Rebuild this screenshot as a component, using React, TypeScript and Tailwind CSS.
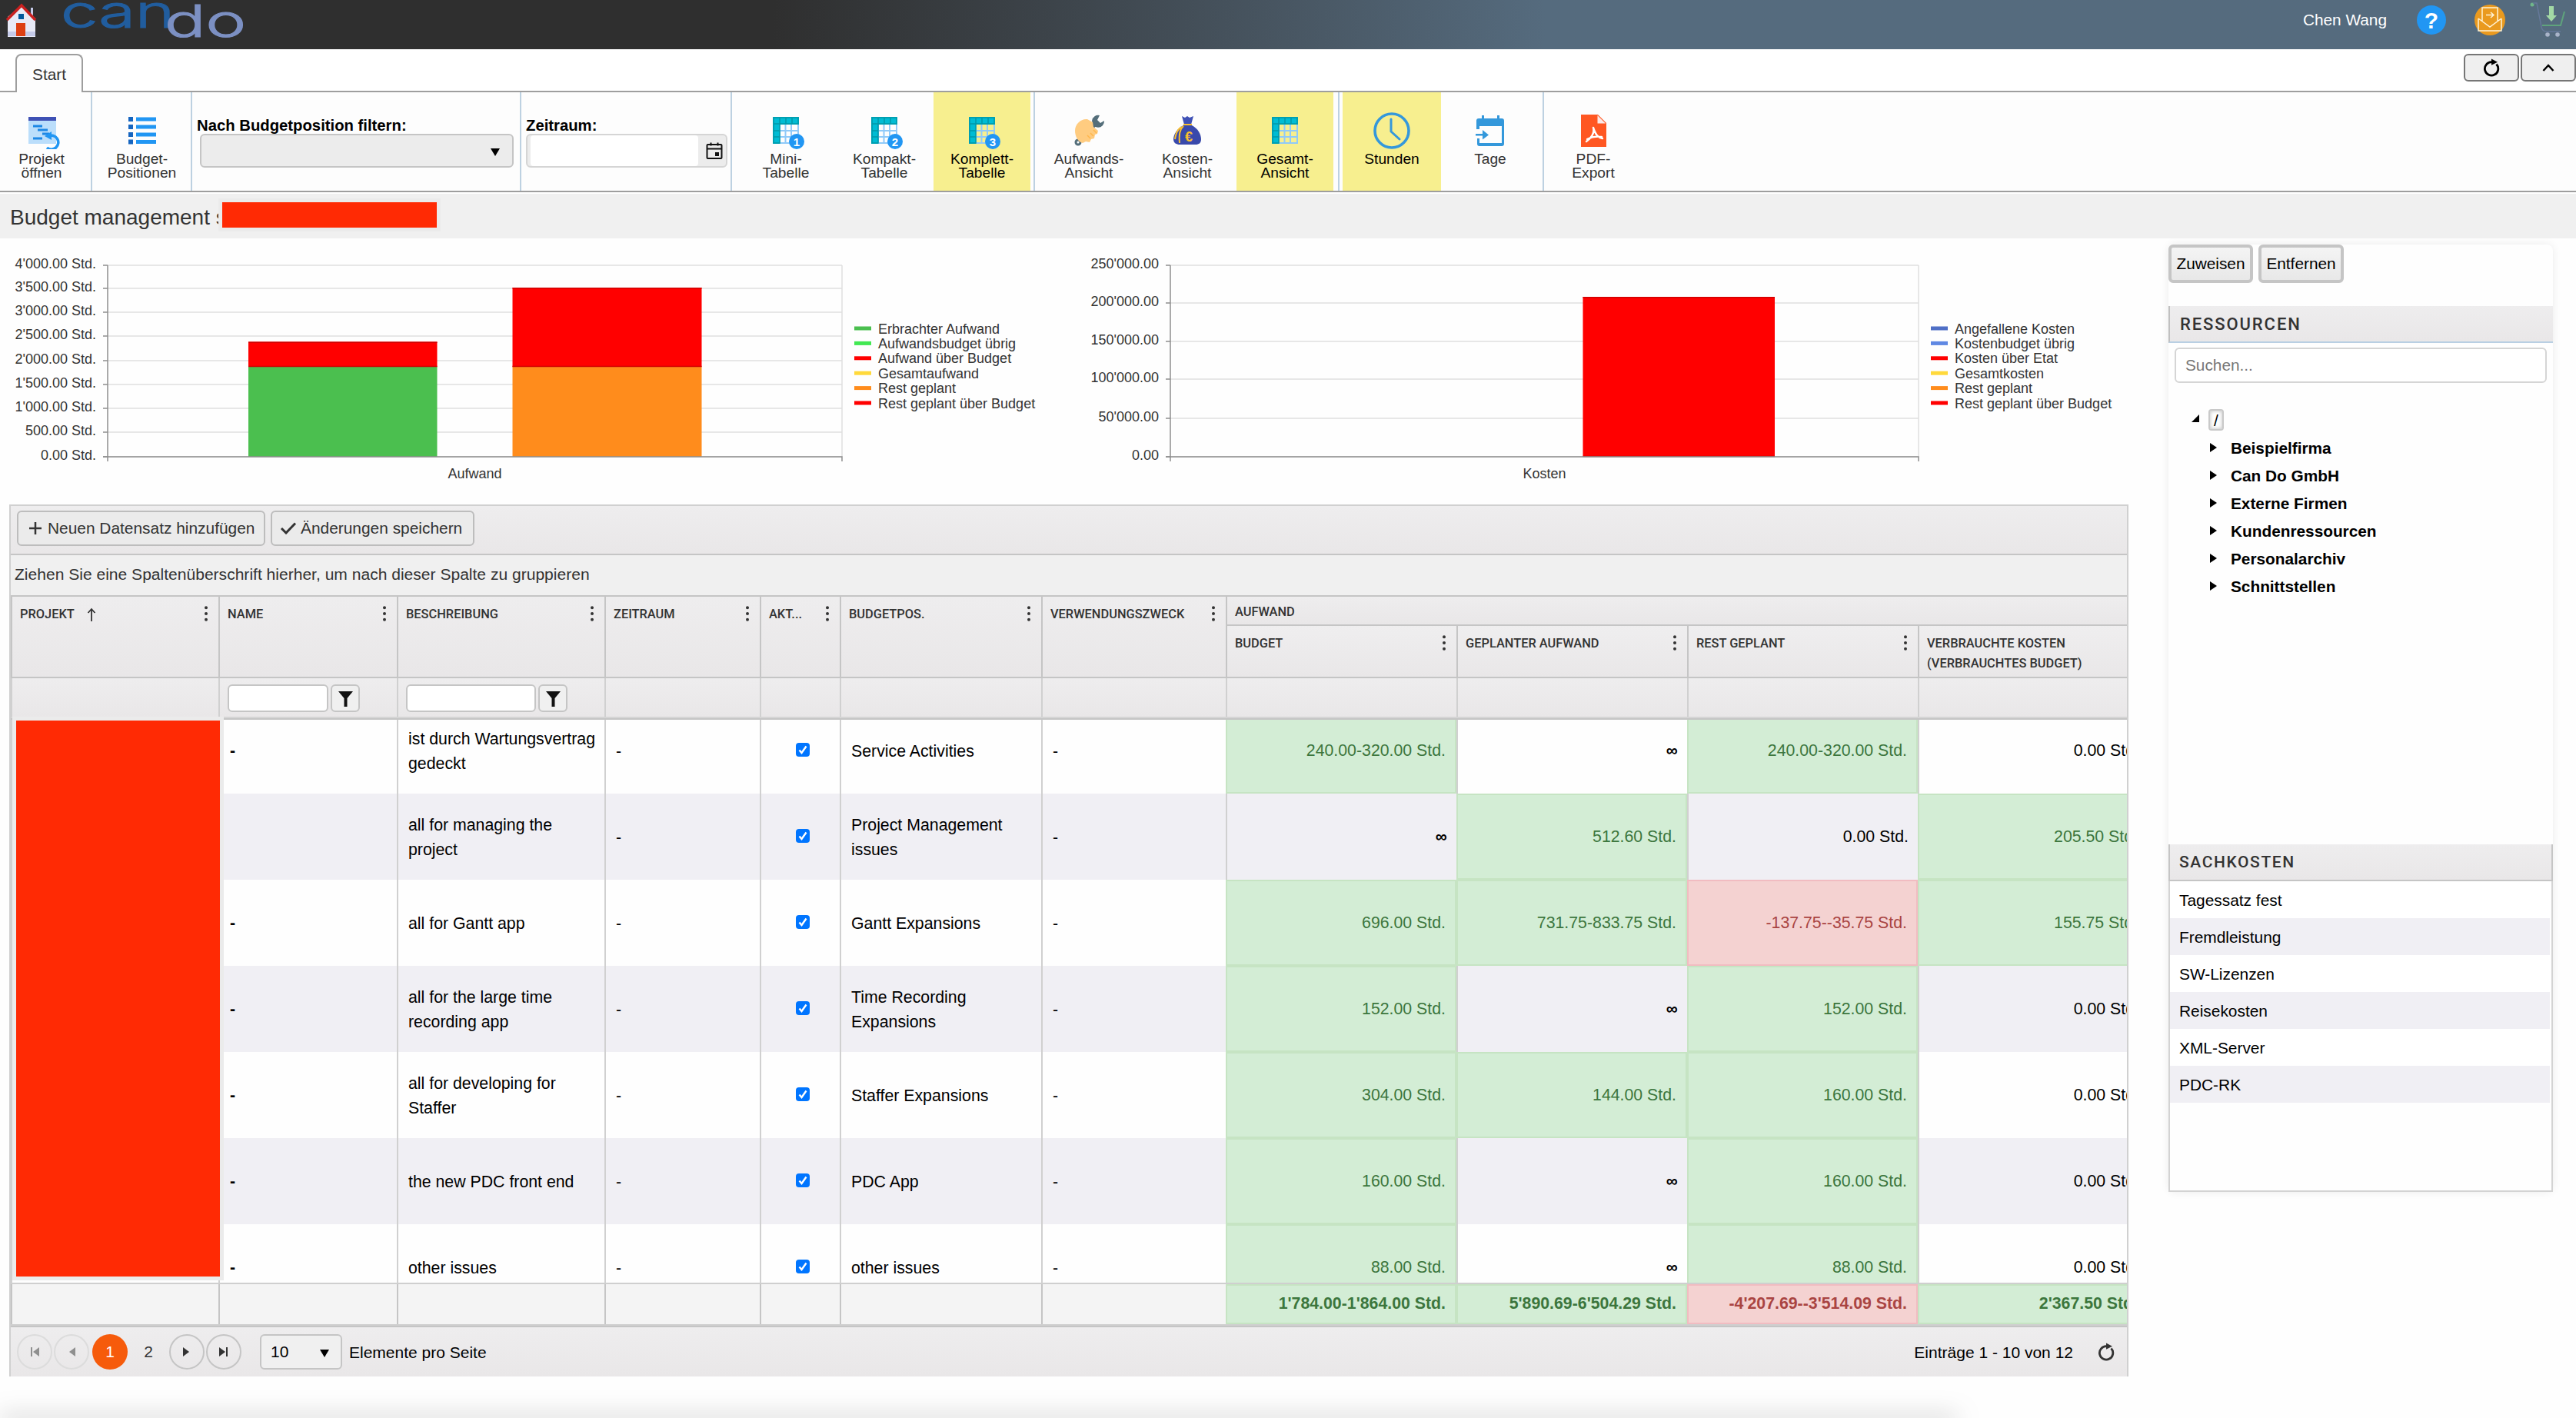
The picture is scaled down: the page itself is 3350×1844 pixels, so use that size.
import { ReactNode } from 'react'
import clsx from 'clsx'

type Tone = 'plain' | 'good' | 'bad'

interface Amount {
  text: string
  tone: Tone
}

interface BudgetRow {
  name: string
  description: string
  position: string
  amounts: Amount[]
}

const good = (text: string): Amount => ({ text, tone: 'good' })
const bad = (text: string): Amount => ({ text, tone: 'bad' })
const plain = (text: string): Amount => ({ text, tone: 'plain' })

const rows: BudgetRow[] = [
  {
    name: '-',
    description: 'ist durch Wartungsvertrag gedeckt',
    position: 'Service Activities',
    amounts: [good('240.00-320.00 Std.'), plain('∞'), good('240.00-320.00 Std.'), plain('0.00 Std.')],
  },
  {
    name: '',
    description: 'all for managing the project',
    position: 'Project Management issues',
    amounts: [plain('∞'), good('512.60 Std.'), plain('0.00 Std.'), good('205.50 Std.')],
  },
  {
    name: '-',
    description: 'all for Gantt app',
    position: 'Gantt Expansions',
    amounts: [good('696.00 Std.'), good('731.75-833.75 Std.'), bad('-137.75--35.75 Std.'), good('155.75 Std.')],
  },
  {
    name: '-',
    description: 'all for the large time recording app',
    position: 'Time Recording Expansions',
    amounts: [good('152.00 Std.'), plain('∞'), good('152.00 Std.'), plain('0.00 Std.')],
  },
  {
    name: '-',
    description: 'all for developing for Staffer',
    position: 'Staffer Expansions',
    amounts: [good('304.00 Std.'), good('144.00 Std.'), good('160.00 Std.'), plain('0.00 Std.')],
  },
  {
    name: '-',
    description: 'the new PDC front end',
    position: 'PDC App',
    amounts: [good('160.00 Std.'), plain('∞'), good('160.00 Std.'), plain('0.00 Std.')],
  },
  {
    name: '-',
    description: 'other issues',
    position: 'other issues',
    amounts: [good('88.00 Std.'), plain('∞'), good('88.00 Std.'), plain('0.00 Std.')],
  },
]

const totals: Amount[] = [
  good("1'784.00-1'864.00 Std."),
  good("5'890.69-6'504.29 Std."),
  bad("-4'207.69--3'514.09 Std."),
  good("2'367.50 Std."),
]

const gridCols =
  'grid grid-cols-[270px_232px_270px_202px_104px_262px_240px_300px_300px_300px_300px]'
const bar = 'bg-linear-to-b from-[#eeedee] to-[#e9e7e8]'

/* ---------- icons ---------- */

function HouseIcon() {
  return (
    <svg className="w-10 h-11" viewBox="0 0 40 44">
      <path d="M32 6h3v14h-3z" fill="#c5cae9" />
      <path d="M2 18 20 3l18 17v24H2z" fill="#e8eaf6" />
      <path d="M2 37h36v6H2z" fill="#c5cae9" />
      <path d="M13 26h12v17H13z" fill="#dd3f12" />
      <path d="M16 14h7v7h-7z" fill="#01579b" />
      <path d="M1 22 20 3l18 19" fill="none" stroke="#c9201f" strokeWidth="3.5" />
    </svg>
  )
}

function Logo() {
  return (
    <svg className="w-[236px] h-[50px]" viewBox="0 0 236 50">
      <g fontFamily="Inter, sans-serif" fontWeight="300" fontSize="58" strokeWidth="1.2">
        <text x="-3" y="34" textLength="148" lengthAdjust="spacingAndGlyphs" fill="#215d9e" stroke="#215d9e">
          can
        </text>
        <text x="132" y="46" textLength="106" lengthAdjust="spacingAndGlyphs" fill="#7c90c3" stroke="#7c90c3">
          do
        </text>
      </g>
    </svg>
  )
}

function ProjectIcon() {
  return (
    <svg className="size-12" viewBox="0 0 48 48">
      <path d="M7 6h36v35H7z" fill="#bbdefb" />
      <path d="M7 6h36v5H7z" fill="#3f51b5" />
      <path d="M13 18h12M19 23h13M25 28h9M13 34h12" stroke="#1e88e5" strokeWidth="3" />
      <path d="M31 46a9 9 0 1 0 2-15" fill="none" stroke="#2196f3" strokeWidth="3.5" />
      <path d="m28 31 9-6v11z" fill="#2196f3" />
    </svg>
  )
}

function ListIcon() {
  return (
    <svg className="size-12" viewBox="0 0 48 48">
      {[9, 19, 29, 38.5].map((y) => (
        <g key={y}>
          <rect x="6" y={y - 3} width="6" height="6" fill="#1565c0" />
          <rect x="16" y={y - 2.5} width="26" height="5" fill="#2196f3" />
        </g>
      ))}
    </svg>
  )
}

function TableIcon(props: { badge?: string }) {
  return (
    <svg className="size-12" viewBox="0 0 48 48">
      <path d="M16 15v26M23.5 15v26M31 15v26M40 15v26M16 24h25M16 32h25M16 40h25" stroke="#90caf9" strokeWidth="2" />
      <path d="M7 6h34v10H16v25H7z" fill="#00bcd4" />
      <path d="M8 7h32v8H16v25H8zM16 7v8M24 7v8M32 7v8M8 15h8M8 24h8M8 32h8" fill="none" stroke="#0097a7" strokeWidth="1.5" />
      {props.badge && (
        <>
          <circle cx="38" cy="38" r="10" fill="#2196f3" />
          <text x="38" y="43.5" textAnchor="middle" fontSize="15" fontWeight="700" fill="#fff">
            {props.badge}
          </text>
        </>
      )}
    </svg>
  )
}

function WrenchIcon() {
  return (
    <svg className="size-12" viewBox="0 0 48 48">
      <circle cx="10" cy="39" r="3" fill="none" stroke="#546e7a" strokeWidth="3" />
      <path d="M12 36 34 13" stroke="#546e7a" strokeWidth="6" />
      <path d="M38 4a8 8 0 1 0 6 7l-5 3-4-4z" fill="#546e7a" />
      <path d="M6 24C6 15 14 8 22 9l7 4 1 6 6 5-1 4-3 1-1 5-4 1-2 4-5-1-4 2C10 39 6 31 6 24z" fill="#ffcc80" />
      <path d="m22 30 4 4M26 27l4 4M30 23l4 4" stroke="#ffb74d" strokeWidth="1.5" />
    </svg>
  )
}

function MoneyIcon() {
  return (
    <svg className="size-12" viewBox="0 0 48 48">
      <path d="m17 5 4 2 3-2 3 2 5-2-3 11H20z" fill="#3f51b5" />
      <path d="M19 17h11c8 4 12 12 12 18 0 5-3 7-7 7H14c-4 0-8-2-8-7 0-6 5-14 13-18z" fill="#3949ab" />
      <path d="M19 16h11M19 18c-5 4-6 12-5 22M16 19c-6 5-7 10-8 16" fill="none" stroke="#fbc02d" strokeWidth="2" />
      <text x="26" y="38" textAnchor="middle" fontSize="18" fontWeight="700" fill="#fbc02d">
        €
      </text>
    </svg>
  )
}

function ClockIcon() {
  return (
    <svg className="size-12" viewBox="0 0 48 48">
      <circle cx="24" cy="24" r="22" fill="none" stroke="#3498db" strokeWidth="3.6" />
      <path d="M23 9v16l11 10" fill="none" stroke="#3498db" strokeWidth="3" strokeLinecap="round" strokeLinejoin="round" />
    </svg>
  )
}

function DayIcon() {
  return (
    <svg className="size-12" viewBox="0 0 48 48">
      <path d="M13 4h3v6h-3zM33 4h3v6h-3z" fill="#3498db" />
      <path d="M6 18v-7q0-3 3-3h30q3 0 3 3v30q0 3-3 3H10q-3 0-3-3v-7h3v6h29V18H10v4H6z" fill="#3498db" />
      <path d="M5 28h9v-5l8 6.500-8 6v-5H5z" fill="#3498db" />
    </svg>
  )
}

function PdfIcon() {
  return (
    <svg className="size-12" viewBox="0 0 48 48">
      <path d="M8 3h22l11 11v31H8z" fill="#ff5722" />
      <path d="M29.500 4v10.500H40z" fill="#fbe9e7" />
      <path d="M24 20c3 9 6 13 12 14M24 20c2 7-3 14-9 18M16 35c6-3 12-4 19-3" fill="none" stroke="#fff" strokeWidth="2.400" strokeLinecap="round" />
    </svg>
  )
}

function CalendarIcon() {
  return (
    <svg className="w-[22px] h-6" viewBox="0 0 22 24" fill="none" stroke="#111" strokeWidth="2">
      <rect x="1.500" y="4" width="19" height="18" rx="1" />
      <path d="M1 9.500h20M6.500 1.500v4M15.500 1.500v4" />
      <rect x="12" y="14" width="5" height="5" fill="#111" stroke="none" />
    </svg>
  )
}

function RefreshIcon() {
  return (
    <svg className="w-[23px] h-6" viewBox="0 0 23 24" fill="none">
      <path d="M17.500 7.500a8.700 8.700 0 1 1-6-2.800" stroke="currentColor" strokeWidth="2.800" />
      <path d="m11 .500 8 4.200-8 4z" fill="currentColor" />
    </svg>
  )
}

function MailIcon() {
  return (
    <svg className="size-[42px]" viewBox="0 0 42 42" fill="none" stroke="#fff3d6" strokeWidth="1.500">
      <circle cx="21" cy="21" r="20" fill="#ea9a1f" stroke="none" />
      <path d="M6 19v16h30V19M6 19l15 11 15-11M11 22V5h20v17" />
      <path d="M16 14.500h9M22 11l4 3.500-4 3.500" />
    </svg>
  )
}

function CartIcon() {
  return (
    <svg className="w-[46px] h-12" viewBox="0 0 46 48" fill="none">
      <circle cx="3" cy="6" r="2.500" fill="#6fb58a" />
      <path d="M4 4h5l6 31q1 6 7 6h18" stroke="#66799a" strokeWidth="1.500" />
      <path d="M45 15l-5 18H16" stroke="#5fa37c" strokeWidth="2" />
      <path d="M25 8h6v12h4l-7 8-7-8h4z" fill="#a3d9a5" />
      <circle cx="23" cy="45" r="2.800" fill="#a9b4c9" />
      <circle cx="36" cy="45" r="2.800" fill="#a9b4c9" />
    </svg>
  )
}

function DotsIcon() {
  return (
    <svg className="w-1 h-5" viewBox="0 0 4 20" fill="#333">
      <circle cx="2" cy="2.200" r="2" />
      <circle cx="2" cy="10" r="2" />
      <circle cx="2" cy="17.800" r="2" />
    </svg>
  )
}

function FilterIcon() {
  return (
    <svg className="w-[19px] h-5" viewBox="0 0 19 20">
      <path d="M0 0h19l-7.500 9v11h-4V9z" fill="#111" />
    </svg>
  )
}

/* ---------- header + ribbon ---------- */

function TopBar() {
  return (
    <header className="h-16 flex justify-between bg-linear-to-r from-[#2f2f2f] from-30% to-[#556b7e] to-60%">
      <div className="flex pl-2 gap-[34px]">
        <div className="pt-1">
          <HouseIcon />
        </div>
        <div className="pt-0.5">
          <Logo />
        </div>
      </div>
      <div className="flex items-start text-white text-[20.8px] pr-[14px]">
        <span className="pt-[6px] leading-10 mr-[39px]">Chen Wang</span>
        <span className="mt-[7px] size-[38px] rounded-full bg-[#2196f3] flex items-center justify-center text-[30px] font-bold mr-[36px]">
          ?
        </span>
        <span className="mt-[5px] mr-[31px]">
          <MailIcon />
        </span>
        <CartIcon />
      </div>
    </header>
  )
}

function RibbonItem(props: { icon: ReactNode; lines: string[]; active?: boolean; width?: string }) {
  return (
    <button
      className={clsx(
        'flex flex-col items-center pt-[26px] text-[19.2px] leading-[18px]',
        props.width ?? 'w-32',
        props.active ? 'bg-[#f7ef8f] text-black' : 'text-[#333]'
      )}
    >
      {props.icon}
      <span className="pt-1">
        {props.lines.map((line) => (
          <span key={line} className="block">
            {line}
          </span>
        ))}
      </span>
    </button>
  )
}

function RibbonGroup(props: { className: string; children: ReactNode }) {
  return <div className={clsx('flex border-r-2 border-[#bdd1e1]', props.className)}>{props.children}</div>
}

function Ribbon() {
  return (
    <>
      <div className="h-14 bg-white flex items-end justify-between pl-5 border-b-2 border-[#9e9e9e]">
        <div className="h-[50px] -mb-0.5 w-[88px] border-2 border-b-0 border-[#9e9e9e] rounded-t-lg bg-[#fdfdfd] flex items-center justify-center text-[20.8px] text-[#333] pt-0.5 relative z-10">
          Start
        </div>
        <div className="flex self-start pt-[6px] gap-0.5">
          <div className="w-[72px] h-9 border-2 border-[#767676] rounded-md bg-[#efefef] flex items-center justify-center">
            <RefreshIcon />
          </div>
          <div className="w-[72px] h-9 border-2 border-[#767676] rounded-md bg-[#efefef] flex items-center justify-center">
            <svg className="w-4 h-3" viewBox="0 0 16 12" fill="none">
              <path d="m1.500 10 6.500-7 6.500 7" stroke="#000" strokeWidth="2.500" />
            </svg>
          </div>
        </div>
      </div>
      <div className="h-[132px] bg-white border-b-2 border-white">
        <nav className="h-[130px] flex bg-[#fdfdfd] border-b-2 border-[#9e9e9e]">
          <RibbonGroup className="w-[120px]">
            <RibbonItem icon={<ProjectIcon />} lines={['Projekt', 'öffnen']} width="w-[108px]" />
          </RibbonGroup>
          <RibbonGroup className="w-[130px] pl-px">
            <RibbonItem icon={<ListIcon />} lines={['Budget-', 'Positionen']} />
          </RibbonGroup>
          <RibbonGroup className="w-[428px] flex-col pl-1.5 pt-8 pr-2">
            <label className="text-[20.3px] leading-[22px] font-bold">Nach Budgetposition filtern:</label>
            <div className="h-11 ml-1 border-2 border-[#c5c5c5] rounded-md bg-[#ececec] flex items-center justify-end pr-4">
              <svg className="w-3 h-2.5 mt-1" viewBox="0 0 12 10">
                <path d="M0 0h12L6 10z" />
              </svg>
            </div>
          </RibbonGroup>
          <RibbonGroup className="w-[274px] flex-col pl-1.5 pt-8 pr-1">
            <label className="text-[20.3px] leading-[22px] font-bold">Zeitraum:</label>
            <div className="h-11 border-2 border-[#d5d5d5] rounded-md bg-[#ececec] flex items-center pl-1 pr-1 justify-between">
              <div className="w-[218px] h-10 rounded bg-white" />
              <CalendarIcon />
            </div>
          </RibbonGroup>
          <RibbonGroup className="pl-1.5 pr-1">
            <RibbonItem icon={<TableIcon badge="1" />} lines={['Mini-', 'Tabelle']} />
            <RibbonItem icon={<TableIcon badge="2" />} lines={['Kompakt-', 'Tabelle']} />
            <RibbonItem icon={<TableIcon badge="3" />} lines={['Komplett-', 'Tabelle']} width="w-[126px]" active />
          </RibbonGroup>
          <RibbonGroup className="pl-1.5 pr-1.5">
            <RibbonItem icon={<WrenchIcon />} lines={['Aufwands-', 'Ansicht']} />
            <RibbonItem icon={<MoneyIcon />} lines={['Kosten-', 'Ansicht']} />
            <RibbonItem icon={<TableIcon />} lines={['Gesamt-', 'Ansicht']} width="w-[126px]" active />
          </RibbonGroup>
          <RibbonGroup className="pl-1 pr-1">
            <RibbonItem icon={<ClockIcon />} lines={['Stunden']} active />
            <RibbonItem icon={<DayIcon />} lines={['Tage']} />
          </RibbonGroup>
          <RibbonItem icon={<PdfIcon />} lines={['PDF-', 'Export']} />
        </nav>
      </div>
    </>
  )
}

/* ---------- charts ---------- */

interface Segment {
  x: number
  width: number
  top: number
  bottom: number
  fill: string
}

interface ChartProps {
  width: number
  left: number
  right: number
  ticks: { y: number; label: string }[]
  segments: Segment[]
  caption: string
  legend: [string, string][]
}

function BudgetChart(props: ChartProps) {
  const { width, left, right, ticks, segments, caption, legend } = props
  return (
    <svg width={width} height={346} viewBox={`0 0 ${width} 346`} fontSize="18" fill="#333">
      {ticks.map((tick) => (
        <g key={tick.label}>
          <path d={`M${left} ${tick.y}H${right}`} stroke="#dfdfdf" strokeWidth="1.500" />
          <path d={`M${left - 6} ${tick.y}h6`} stroke="#8e8e8e" strokeWidth="1.500" />
          <text x={left - 15} y={tick.y + 4} textAnchor="end">
            {tick.label}
          </text>
        </g>
      ))}
      <path d={`M${right} 35v249`} stroke="#dfdfdf" strokeWidth="1.500" />
      {segments.map((s) => (
        <rect key={`${s.x}-${s.top}`} x={s.x} y={s.top} width={s.width} height={s.bottom - s.top} fill={s.fill} />
      ))}
      {segments
        .filter((s) => s.fill === '#ff0000')
        .map((s) => (
          <path key={s.x} d={`M${s.x} ${s.top + 0.75}h${s.width}M${s.x} ${s.bottom - 0.5}h${s.width}`} stroke="#d00000" strokeWidth="1.500" />
        ))}
      <path d={`M${left} 35v255M${left - 6} 284H${right}v6`} fill="none" stroke="#8e8e8e" strokeWidth="1.500" />
      <text x={(left + right) / 2} y="312" textAnchor="middle">
        {caption}
      </text>
      {legend.map(([label, color], i) => (
        <g key={label}>
          <rect x={right + 16} y={114.500 + i * 19.400} width="22" height="5" fill={color} />
          <text x={right + 47} y={123.500 + i * 19.400}>
            {label}
          </text>
        </g>
      ))}
    </svg>
  )
}

function Charts() {
  return (
    <div className="flex">
      <BudgetChart
        width={1390}
        left={140}
        right={1095}
        caption="Aufwand"
        ticks={[
          { y: 35, label: "4'000.00 Std." },
          { y: 65, label: "3'500.00 Std." },
          { y: 96, label: "3'000.00 Std." },
          { y: 127, label: "2'500.00 Std." },
          { y: 159, label: "2'000.00 Std." },
          { y: 190, label: "1'500.00 Std." },
          { y: 221, label: "1'000.00 Std." },
          { y: 252, label: '500.00 Std.' },
          { y: 284, label: '0.00 Std.' },
        ]}
        segments={[
          { x: 323, width: 245.500, top: 167, bottom: 284, fill: '#4bbf4f' },
          { x: 323, width: 245.500, top: 134.500, bottom: 167, fill: '#ff0000' },
          { x: 666.500, width: 246, top: 167, bottom: 284, fill: '#ff8c1c' },
          { x: 666.500, width: 246, top: 64, bottom: 167, fill: '#ff0000' },
        ]}
        legend={[
          ['Erbrachter Aufwand', '#4bbf4f'],
          ['Aufwandsbudget übrig', '#41e852'],
          ['Aufwand über Budget', '#ff0000'],
          ['Gesamtaufwand', '#ffd93b'],
          ['Rest geplant', '#ff8c1c'],
          ['Rest geplant über Budget', '#ff0000'],
        ]}
      />
      <BudgetChart
        width={1410}
        left={132}
        right={1105}
        caption="Kosten"
        ticks={[
          { y: 35, label: "250'000.00" },
          { y: 84, label: "200'000.00" },
          { y: 134, label: "150'000.00" },
          { y: 183, label: "100'000.00" },
          { y: 234, label: "50'000.00" },
          { y: 284, label: '0.00' },
        ]}
        segments={[{ x: 668.500, width: 249.500, top: 76, bottom: 284, fill: '#ff0000' }]}
        legend={[
          ['Angefallene Kosten', '#4f6fc6'],
          ['Kostenbudget übrig', '#5f88e3'],
          ['Kosten über Etat', '#ff0000'],
          ['Gesamtkosten', '#ffd93b'],
          ['Rest geplant', '#ff8c1c'],
          ['Rest geplant über Budget', '#ff0000'],
        ]}
      />
    </div>
  )
}

/* ---------- grid ---------- */

function HeadCell(props: { label: string; sorted?: boolean; menu?: boolean; className?: string }) {
  return (
    <div
      className={clsx(
        'flex justify-between border-l-2 border-[#c5c5c5] pl-2.5 pr-[14px] pt-2.5 whitespace-nowrap overflow-hidden',
        props.className
      )}
    >
      <span className="flex items-start gap-4 leading-[26px]">
        {props.label}
        {props.sorted && (
          <svg className="w-3 h-[18px] mt-1" viewBox="0 0 12 18" fill="none" stroke="#333" strokeWidth="1.800">
            <path d="M6 18V2M1.500 7 6 2l4.500 5" />
          </svg>
        )}
      </span>
      {props.menu !== false && (
        <span className="pt-0.5">
          <DotsIcon />
        </span>
      )}
    </div>
  )
}

function FilterField(props: { width: string }) {
  return (
    <div className="flex gap-[3px] pl-2.5 pt-2">
      <div className={clsx('h-9 border-2 border-[#c5c5c5] rounded-md bg-white', props.width)} />
      <div className="w-[38px] h-9 border-2 border-[#c5c5c5] rounded-md bg-[#f0f0f0] flex items-center justify-center pt-0.5">
        <FilterIcon />
      </div>
    </div>
  )
}

function AmountCell({ text, tone }: Amount) {
  return (
    <div
      className={clsx(
        'flex items-center justify-end pr-3 whitespace-nowrap',
        tone === 'good' && 'border-2 border-[#c6e4c3] bg-[#d3edd5] text-[#3c763d]',
        tone === 'bad' && 'border-2 border-[#f1bcc1] bg-[#f4d2d1] text-[#a94442]',
        tone === 'plain' && 'border-l-2 border-[#d0d0d0]',
        text === '∞' && 'font-bold'
      )}
    >
      {text}
    </div>
  )
}

function TextCell(props: { children?: ReactNode; className?: string }) {
  return (
    <div className={clsx('flex items-center border-l-2 border-[#d0d0d0] pl-[13px] pr-2', props.className)}>
      {props.children}
    </div>
  )
}

function GridHeader() {
  return (
    <div className="h-40 overflow-hidden border-b-2 border-[#c5c5c5]">
      <div className={clsx(gridCols, bar, 'h-[106px] border-b-2 border-[#c5c5c5] text-[#333] text-[16.4px] font-medium font-[Roboto]')}>
        <HeadCell label="PROJEKT" sorted />
        <HeadCell label="NAME" />
        <HeadCell label="BESCHREIBUNG" />
        <HeadCell label="ZEITRAUM" />
        <HeadCell label="AKT..." />
        <HeadCell label="BUDGETPOS." />
        <HeadCell label="VERWENDUNGSZWECK" />
        <div className="col-span-4">
          <div className={clsx(bar, 'h-[38px] border-l-2 border-b-2 border-[#c5c5c5] pl-2.5 pt-[7px] leading-[26px]')}>
            AUFWAND
          </div>
          <div className="h-[66px] grid grid-cols-4 bg-linear-to-b from-[#efeeef] to-[#e9e7e8]">
            <HeadCell label="BUDGET" />
            <HeadCell label="GEPLANTER AUFWAND" />
            <HeadCell label="REST GEPLANT" />
            <div className="border-l-2 border-[#c5c5c5] pl-2.5 pt-2.5 leading-[26px]">
              VERBRAUCHTE KOSTEN
              <br />
              (VERBRAUCHTES BUDGET)
            </div>
          </div>
        </div>
      </div>
      <div className={clsx(gridCols, bar, 'h-[52px] border-b-2 border-[#d5d5d5]')}>
        {Array.from({ length: 11 }, (_, i) => (
          <div key={i} className="border-l-2 border-[#d0d0d0]">
            {i === 1 && <FilterField width="w-[131px]" />}
            {i === 2 && <FilterField width="w-[169px]" />}
          </div>
        ))}
      </div>
    </div>
  )
}

function GridBody() {
  return (
    <div className="h-[732px] overflow-hidden text-[21.3px] leading-[32px] text-black">
      <div className="-mt-4">
        {rows.map((row, i) => (
          <div key={row.position} className={clsx(gridCols, 'h-28', i % 2 === 1 && 'bg-[#f0eff4]')}>
            <TextCell />
            <TextCell className="font-bold">{row.name}</TextCell>
            <TextCell className="pt-px">{row.description}</TextCell>
            <TextCell className="pt-0.5">-</TextCell>
            <TextCell className="justify-center">
              <span className="size-[18px] mb-0.5 rounded bg-[#0075ff] flex items-center justify-center">
                <svg className="size-[14px]" viewBox="0 0 14 14" fill="none">
                  <path d="m2.500 7.500 3 3.500 6-8.500" stroke="#fff" strokeWidth="2.400" />
                </svg>
              </span>
            </TextCell>
            <TextCell className="pt-px">{row.position}</TextCell>
            <TextCell className="pt-0.5">-</TextCell>
            {row.amounts.map((amount, n) => (
              <AmountCell key={n} {...amount} />
            ))}
          </div>
        ))}
      </div>
    </div>
  )
}

function PageButton(props: { d: string; disabled?: boolean }) {
  return (
    <span
      className={clsx(
        'w-[46px] h-[46px] rounded-full border-2 flex items-center justify-center',
        props.disabled ? 'border-[#dcdcdc]' : 'border-[#c5c5c5]'
      )}
    >
      <svg className="size-3" viewBox="0 0 12 12">
        <path d={props.d} fill={props.disabled ? '#8f8f8f' : '#333'} />
      </svg>
    </span>
  )
}

function Pager() {
  return (
    <div className={clsx(bar, 'h-16 flex items-center justify-between pl-2 pr-[15px] text-[21px] text-black')}>
      <div className="flex items-center">
        <PageButton d="M1 0h2v12H1zM12 0v12L4 6z" disabled />
        <span className="w-0.5" />
        <PageButton d="M11 0v12L3 6z" disabled />
        <span className="ml-1 w-[46px] h-[46px] rounded-full bg-[#f65b0b] text-white flex items-center justify-center">1</span>
        <span className="w-[54px] text-center text-[#333]">2</span>
        <PageButton d="M1 0v12l8-6z" />
        <span className="w-0.5" />
        <PageButton d="M0 0v12l8-6zM9 0h2v12H9z" />
        <div className="ml-6 w-[107px] h-[46px] border-2 border-[#c5c5c5] rounded-md bg-[#f0f0f0] flex items-center justify-between pl-3 pr-[15px]">
          10
          <svg className="w-3 h-2.5 mt-1" viewBox="0 0 12 10">
            <path d="M0 0h12L6 10z" />
          </svg>
        </div>
        <span className="ml-[9px] pt-0.5">Elemente pro Seite</span>
      </div>
      <div className="flex items-center text-[#333]">
        <span className="text-black mr-8 pt-0.5">Einträge 1 - 10 von 12</span>
        <RefreshIcon />
      </div>
    </div>
  )
}

function BudgetGrid() {
  return (
    <section className="relative ml-3 w-[2756px] overflow-hidden border-x-2 border-t-2 border-[#d0d0d0]">
      <div className={clsx(bar, 'h-[62px] flex items-start gap-[7px] pl-2 pt-1.5 text-[20.9px] text-[#333]')}>
        <button className="h-[46px] w-[323px] border-2 border-[#bdbdbd] rounded-md bg-[#ebebeb] flex items-center pl-[14px] gap-2 whitespace-nowrap">
          <svg className="size-4" viewBox="0 0 16 16">
            <path d="M8 0v16M0 8h16" stroke="#333" strokeWidth="2.500" />
          </svg>
          Neuen Datensatz hinzufügen
        </button>
        <button className="h-[46px] w-[265px] border-2 border-[#bdbdbd] rounded-md bg-[#ebebeb] flex items-center pl-2.5 gap-[5px] whitespace-nowrap">
          <svg className="w-[22px] h-4" viewBox="0 0 22 16" fill="none">
            <path d="m2 8 6 6L20 1.500" stroke="#333" strokeWidth="3" />
          </svg>
          Änderungen speichern
        </button>
      </div>
      <div className="h-14 border-y-2 border-[#c5c5c5] bg-[#f0f0f0] pl-[5px] pb-0.5 flex items-center text-[21.05px] text-[#333]">
        Ziehen Sie eine Spaltenüberschrift hierher, um nach dieser Spalte zu gruppieren
      </div>
      <GridHeader />
      <GridBody />
      <div className="h-14 border-y-2 border-[#cfcfcf] overflow-hidden">
        <div className={clsx(gridCols, 'h-[52px] bg-[#f4f4f4] text-[21.3px] font-bold')}>
          {Array.from({ length: 7 }, (_, i) => (
            <div key={i} className="border-l-2 border-[#c5c5c5]" />
          ))}
          {totals.map((total) => (
            <AmountCell key={total.text} {...total} />
          ))}
        </div>
      </div>
      <div className="h-0.5 bg-[#c5c5c5]" />
      <Pager />
      {/* blanked-out project names */}
      <div className="absolute left-0.5 top-[274px] w-[275px] h-[733px] border-[5px] border-[#ebebeb] bg-[#ff2a04]" />
    </section>
  )
}

/* ---------- sidebar ---------- */

const companies = [
  'Beispielfirma',
  'Can Do GmbH',
  'Externe Firmen',
  'Kundenressourcen',
  'Personalarchiv',
  'Schnittstellen',
]

const materialCosts = ['Tagessatz fest', 'Fremdleistung', 'SW-Lizenzen', 'Reisekosten', 'XML-Server', 'PDC-RK']

function Sidebar() {
  return (
    <aside className="mt-2 w-[500px] h-[1232px] rounded-lg bg-[#fefefe] shadow-[0_0_12px_rgba(0,0,0,0.08)] flex flex-col text-[20.8px] text-black">
      <div className="flex gap-[7px] h-20">
        <button className="h-[50px] w-[110px] border-4 border-[#c5c5c5] rounded-md bg-linear-to-b from-[#f4f4f4] to-[#e8e8e8]">
          Zuweisen
        </button>
        <button className="h-[50px] w-[111px] border-4 border-[#c5c5c5] rounded-md bg-linear-to-b from-[#f4f4f4] to-[#e8e8e8]">
          Entfernen
        </button>
      </div>
      <h2
        className={clsx(
          bar,
          'h-12 border-l-2 border-l-[#c0c0c0] border-b-2 border-b-[#b9cfe3] pl-[13px] leading-[48px]',
          'font-[Roboto] font-medium text-[22px] tracking-[1.9px] text-[#333]'
        )}
      >
        RESSOURCEN
      </h2>
      <div className="mt-1.5 ml-2 w-[484px] h-[46px] border-2 border-[#d5d5d5] rounded-md bg-white pl-3 leading-[42px] text-[#777]">
        Suchen...
      </div>
      <div className="mt-[34px] pl-[30px] h-7 flex items-start">
        <svg className="size-[10px] mt-[7px]" viewBox="0 0 10 10">
          <path d="M10 0v10H0z" />
        </svg>
        <span className="ml-3 w-5 h-7 rounded border-2 border-[#c9c9c9] shadow-[inset_0_0_5px_#bbb] leading-[25px] text-center">
          /
        </span>
      </div>
      <ul className="pl-[54px] pt-[5px] flex-1">
        {companies.map((company) => (
          <li key={company} className="h-9 flex items-center font-bold">
            <svg className="w-[9px] h-3 -mt-0.5 mr-[18px]" viewBox="0 0 9 12">
              <path d="M0 0v12l9-6z" />
            </svg>
            {company}
          </li>
        ))}
      </ul>
      <h2
        className={clsx(
          bar,
          'h-12 border-x-2 border-x-[#c5c5c5] border-b-2 border-b-[#c5c5c5] pl-3 leading-[47px]',
          'font-[Roboto] font-medium text-[21px] tracking-[1.6px] text-[#333]'
        )}
      >
        SACHKOSTEN
      </h2>
      <ul className="h-[404px] border-2 border-t-0 border-[#d3d3d3] pr-0.5">
        {materialCosts.map((cost) => (
          <li key={cost} className="h-12 pl-3 leading-[50px] text-[20.9px] bg-white even:bg-[#f0eff4]">
            {cost}
          </li>
        ))}
      </ul>
    </aside>
  )
}

export default function App() {
  return (
    <div className="relative w-[3350px] h-[1844px] overflow-hidden bg-[#fefefe] font-['Liberation_Sans',sans-serif]">
      <TopBar />
      <Ribbon />
      <div className="h-[58px] bg-[#f0f0f0] pl-[13px] flex text-[28px] leading-[62px] text-[#333] whitespace-pre">
        Budget management s
        <div className="relative z-10 -ml-[11px] mt-1.5 w-[289px] h-[43px] border-[5px] border-[#ebebeb] bg-[#ff2a04]" />
      </div>
      <div className="flex">
        <main className="w-[2820px]">
          <Charts />
          <BudgetGrid />
        </main>
        <Sidebar />
      </div>
      {/* soft edge of the dock below the page */}
      <div className="absolute left-0 -bottom-1 w-[2545px] h-1 shadow-[0_0_30px_rgba(0,0,0,0.6)]" />
    </div>
  )
}
